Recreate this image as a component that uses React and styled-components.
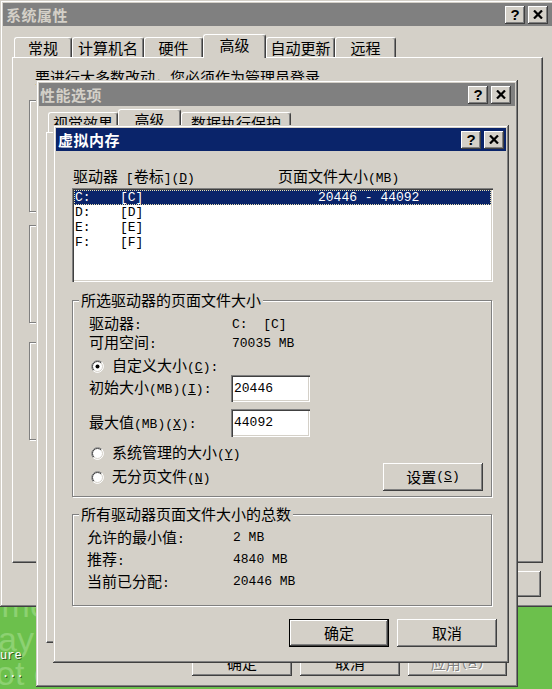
import React from "react";
import styled, { createGlobalStyle } from "styled-components";

const FACE = "#d4d0c8";
const NAVY = "#0a246a";
const CJK = `"Noto Sans CJK SC", "Noto Sans CJK JP", sans-serif`;

const Global = createGlobalStyle`
  html, body { margin: 0; padding: 0; background: #6cc04c; }
  body {
    width: 552px; height: 689px; overflow: hidden;
    font-family: ${CJK}; font-size: 15px; color: #000;
  }
`;

const Lat = styled.span`
  font-family: "Liberation Mono", monospace;
  font-size: 13px;
  white-space: pre;
`;
const Acc = styled.span`
  text-decoration: underline;
  text-underline-offset: 1px;
`;

function T({ s }) {
  const out = [];
  const re = /([\x00-\x7f]+)|([^\x00-\x7f]+)/g;
  let m;
  let k = 0;
  while ((m = re.exec(s))) {
    if (m[1]) {
      const parts = m[1].split(/&(.)/);
      out.push(
        <Lat key={k++}>
          {parts.map((p, i) => (i % 2 ? <Acc key={i}>{p}</Acc> : p))}
        </Lat>
      );
    } else {
      out.push(<React.Fragment key={k++}>{m[2]}</React.Fragment>);
    }
  }
  return <>{out}</>;
}

/* ---------- desktop ---------- */
const Desktop = styled.div`
  position: relative;
  width: 552px;
  height: 689px;
  overflow: hidden;
  background: #6cc04c;
`;
const Watermark = styled.div`
  position: absolute;
  left: ${(p) => p.$x}px;
  top: ${(p) => p.$y}px;
  font-family: "Liberation Sans", sans-serif;
  font-size: 34px;
  line-height: 34px;
  color: #8dd172;
  white-space: pre;
`;
const IconLabel = styled.div`
  position: absolute;
  left: ${(p) => p.$x}px;
  top: ${(p) => p.$y}px;
  font-family: "Liberation Mono", monospace;
  font-size: 12px;
  line-height: 12px;
  color: #fff;
  text-shadow: 1px 1px #2d5a20;
  white-space: pre;
`;

/* ---------- window chrome ---------- */
const Win = styled.div`
  position: absolute;
  z-index: ${(p) => p.$z};
  left: ${(p) => p.$x}px;
  top: ${(p) => p.$y}px;
  width: ${(p) => p.$w}px;
  height: ${(p) => p.$h}px;
  box-sizing: border-box;
  padding: 3px;
  background: ${FACE};
  box-shadow: inset -1px -1px #404040, inset 1px 1px ${FACE},
    inset -2px -2px #808080, inset 2px 2px #fff;
  display: flex;
  flex-direction: column;
  line-height: 18px;
`;
const TitleBar = styled.div`
  flex: none;
  height: 23px;
  display: flex;
  align-items: center;
  padding: 0 ${(p) => p.$pr ?? 2}px 0 ${(p) => p.$pl ?? 2}px;
  background: ${(p) => (p.$active ? NAVY : "#808080")};
  color: ${(p) => (p.$active ? "#fff" : FACE)};
`;
const TitleText = styled.div`
  flex: 1;
  font-weight: bold;
  font-size: 15px;
  line-height: 23px;
  letter-spacing: 0.5px;
`;
const CapBtn = styled.div`
  flex: none;
  width: 20px;
  height: 18px;
  margin-left: ${(p) => p.$gap || 0}px;
  box-sizing: border-box;
  background: ${FACE};
  box-shadow: inset -1px -1px #404040, inset 1px 1px #fff,
    inset -2px -2px #808080;
  display: flex;
  align-items: center;
  justify-content: center;
  color: #000;
  font-family: "Liberation Sans", sans-serif;
  font-weight: bold;
  font-size: 15px;
  line-height: 18px;
`;
const CloseGlyph = () => (
  <svg width="10" height="9" viewBox="0 0 10 9">
    <path d="M1 0.5 L9 8.5 M9 0.5 L1 8.5" stroke="#000" strokeWidth="2.2" />
  </svg>
);
const Caption = ({ title, active, pl, pr }) => (
  <TitleBar $active={active} $pl={pl} $pr={pr}>
    <TitleText>{title}</TitleText>
    <CapBtn>?</CapBtn>
    <CapBtn $gap={3}>
      <CloseGlyph />
    </CapBtn>
  </TitleBar>
);

const WinBody = styled.div`
  flex: 1;
  display: flex;
  flex-direction: column;
  padding: ${(p) => p.$pad};
`;

/* ---------- tabs ---------- */
const TabRow = styled.div`
  display: flex;
  align-items: flex-end;
  height: ${(p) => p.$h}px;
  margin-top: ${(p) => p.$mt}px;
  padding-left: 2px;
  position: relative;
  z-index: 2;
`;
const Tab = styled.div`
  flex: none;
  width: ${(p) => p.$w}px;
  height: ${(p) => (p.$sel ? 24 : 20)}px;
  margin-bottom: ${(p) => (p.$sel ? -1 : 0)}px;
  box-sizing: border-box;
  border-top: 1px solid #fff;
  border-left: 1px solid #fff;
  border-right: 1px solid #404040;
  border-radius: 3px 3px 0 0;
  box-shadow: inset -1px 0 #808080;
  background: ${FACE};
  display: flex;
  align-items: ${(p) => (p.$sel ? "flex-start" : "center")};
  justify-content: center;
  padding-top: ${(p) => (p.$sel ? 1 : 0)}px;
  white-space: nowrap;
`;
const Panel = styled.div`
  width: ${(p) => p.$w}px;
  height: ${(p) => p.$h}px;
  box-sizing: border-box;
  border-top: 1px solid #fff;
  border-left: 1px solid #fff;
  border-right: 1px solid #404040;
  border-bottom: 1px solid #404040;
  box-shadow: inset -1px -1px #808080;
  display: flex;
  flex-direction: column;
  align-items: flex-start;
  position: relative;
  z-index: 1;
`;
const Notice = styled.div`
  margin: 10px 0 0 22px;
  line-height: 18px;
`;

/* ---------- group box ---------- */
const Group = styled.div`
  position: relative;
  flex: none;
  width: ${(p) => p.$w}px;
  height: ${(p) => p.$h}px;
  margin-top: ${(p) => p.$mt}px;
  margin-left: ${(p) => p.$ml || 0}px;
  box-sizing: border-box;
  border: 1px solid #808080;
  box-shadow: inset 1px 1px #fff, 1px 1px #fff;
  padding: ${(p) => p.$pad || "0"};
  display: flex;
  flex-direction: column;
`;
const Legend = styled.div`
  position: absolute;
  left: 6px;
  top: -10px;
  padding: 0 2px;
  background: ${FACE};
  line-height: 18px;
  white-space: nowrap;
`;

/* ---------- controls ---------- */
const Btn = styled.button`
  flex: none;
  width: ${(p) => p.$w || 100}px;
  height: ${(p) => p.$h || 28}px;
  border: none;
  padding: 0;
  margin: 0;
  font: inherit;
  box-sizing: border-box;
  background: ${FACE};
  display: flex;
  align-items: center;
  justify-content: center;
  color: ${(p) => (p.$dis ? "#808080" : "#000")};
  text-shadow: ${(p) => (p.$dis ? "1px 1px #fff" : "none")};
  box-shadow: ${(p) =>
    p.$def
      ? `inset 0 0 0 1px #000, inset -2px -2px #404040, inset 2px 2px #fff, inset -3px -3px #808080`
      : `inset -1px -1px #404040, inset 1px 1px #fff, inset -2px -2px #808080`};
`;
const BtnRow = styled.div`
  display: flex;
  justify-content: flex-end;
  gap: 8px;
  margin-top: ${(p) => p.$mt}px;
  padding-right: ${(p) => p.$pr}px;
  width: ${(p) => p.$w}px;
  box-sizing: border-box;
`;

const HeaderRow = styled.div`
  display: flex;
  margin-top: 16px;
  height: 18px;
  padding-left: 1px;
`;
const HeadCell = styled.div`
  width: ${(p) => p.$w}px;
  flex: none;
  white-space: nowrap;
`;
const ListBox = styled.div`
  margin-top: 3px;
  width: 421px;
  height: 94px;
  box-sizing: border-box;
  padding: 2px;
  background: #fff;
  box-shadow: inset 1px 1px #808080, inset 2px 2px #404040,
    inset -1px -1px #fff, inset -2px -2px ${FACE};
`;
const ListRow = styled.div`
  display: flex;
  align-items: center;
  height: 15px;
  box-sizing: border-box;
  padding-left: 1px;
  background: ${(p) => (p.$sel ? NAVY : "transparent")};
  color: ${(p) => (p.$sel ? "#fff" : "#000")};
  outline: ${(p) => (p.$sel ? "1px dotted #e8e0b0" : "none")};
  outline-offset: -1px;
  font-family: "Liberation Mono", monospace;
  font-size: 13px;
  line-height: 15px;
`;
const Cell = styled.span`
  flex: none;
  width: ${(p) => p.$w}px;
  white-space: pre;
`;

const FieldRow = styled.div`
  display: grid;
  grid-template-columns: ${(p) => p.$col}px 1fr;
  align-items: center;
  height: ${(p) => p.$h}px;
  margin-top: ${(p) => p.$mt || 0}px;
  white-space: nowrap;
`;
const RadioRow = styled.div`
  display: flex;
  align-items: center;
  gap: 8px;
  height: 18px;
  margin-top: ${(p) => p.$mt || 0}px;
  padding-left: 2px;
  white-space: nowrap;
`;
const Edit = styled.div`
  width: 79px;
  height: ${(p) => p.$h}px;
  box-sizing: border-box;
  margin-left: -1px;
  padding-left: 3px;
  background: #fff;
  display: flex;
  align-items: center;
  box-shadow: inset 1px 1px #808080, inset 2px 2px #404040,
    inset -1px -1px #fff, inset -2px -2px ${FACE};
`;
const BottomArea = styled.div`
  display: flex;
  justify-content: space-between;
  align-items: flex-end;
  margin-top: 7px;
  height: 47px;
`;
const RadioCol = styled.div`
  display: flex;
  flex-direction: column;
  align-self: flex-start;
`;

const Radio = ({ on }) => (
  <svg width="13" height="13" viewBox="0 0 13 13" style={{ flex: "none" }}>
    <circle cx="6.5" cy="6.5" r="6" fill="#fff" />
    <path d="M2.26 10.74 A6 6 0 0 1 10.74 2.26" stroke="#808080" fill="none" />
    <path d="M10.74 2.26 A6 6 0 0 1 2.26 10.74" stroke="#fff" fill="none" />
    <path d="M2.96 10.04 A5 5 0 0 1 10.04 2.96" stroke="#404040" fill="none" />
    <path d="M10.04 2.96 A5 5 0 0 1 2.96 10.04" stroke={FACE} fill="none" />
    {on && <circle cx="6.5" cy="6.5" r="2" fill="#000" />}
  </svg>
);

const drives = [
  { d: "C:", l: "[C]", s: "20446 - 44092", sel: true },
  { d: "D:", l: "[D]", s: "" },
  { d: "E:", l: "[E]", s: "" },
  { d: "F:", l: "[F]", s: "" },
];

export default function App() {
  return (
    <Desktop>
      <Global />
      <Watermark $x={-6} $y={588}>ime</Watermark>
      <Watermark $x={-2} $y={622}>ay c</Watermark>
      <Watermark $x={-4} $y={656}>ot c</Watermark>
      <IconLabel $x={0} $y={650}>ure</IconLabel>
      <IconLabel $x={2} $y={668}>...</IconLabel>

      {/* 系统属性 */}
      <Win $z={1} $x={0} $y={0} $w={556} $h={607}>
        <Caption title="系统属性" pl={3} pr={5} />
        <WinBody $pad="0 0 0 9px">
          <TabRow $mt={8} $h={23}>
            <Tab $w={58}>常规</Tab>
            <Tab $w={72}>计算机名</Tab>
            <Tab $w={59}>硬件</Tab>
            <Tab $w={63} $sel>高级</Tab>
            <Tab $w={69}>自动更新</Tab>
            <Tab $w={61}>远程</Tab>
          </TabRow>
          <Panel $w={531} $h={506}>
            <Notice>要进行大多数改动，您必须作为管理员登录。</Notice>
            <Group $w={488} $h={112} $mt={14} $ml={16} />
            <Group $w={488} $h={98} $mt={13} $ml={16} />
            <Group $w={488} $h={98} $mt={19} $ml={16} />
          </Panel>
          <BtnRow $mt={8} $pr={2} $w={531}>
            <Btn $w={98} $h={26}>确定</Btn>
            <Btn $w={98} $h={26}>取消</Btn>
            <Btn $w={98} $h={26}>
              <T s="应用(&A)" />
            </Btn>
          </BtnRow>
        </WinBody>
      </Win>

      {/* 性能选项 */}
      <Win $z={2} $x={36} $y={80} $w={482} $h={607}>
        <Caption title="性能选项" pl={1} pr={4} />
        <WinBody $pad="0 0 0 7px">
          <TabRow $mt={3} $h={23}>
            <Tab $w={70}>视觉效果</Tab>
            <Tab $w={63} $sel>高级</Tab>
            <Tab $w={110}>数据执行保护</Tab>
          </TabRow>
          <Panel $w={462} $h={511} />
          <BtnRow $mt={6} $pr={1} $w={462}>
            <Btn $h={27}>确定</Btn>
            <Btn $h={27}>取消</Btn>
            <Btn $h={27} $w={99} $dis>
              <T s="应用(&A)" />
            </Btn>
          </BtnRow>
        </WinBody>
      </Win>

      {/* 虚拟内存 */}
      <Win $z={3} $x={53} $y={125} $w={456} $h={538}>
        <Caption title="虚拟内存" active pl={2} pr={2} />
        <WinBody $pad="0 0 0 16px">
          <HeaderRow>
            <HeadCell $w={205}>
              <T s="驱动器 [卷标](&D)" />
            </HeadCell>
            <HeadCell>
              <T s="页面文件大小(MB)" />
            </HeadCell>
          </HeaderRow>
          <ListBox>
            {drives.map((r) => (
              <ListRow key={r.d} $sel={r.sel}>
                <Cell $w={45}>{r.d}</Cell>
                <Cell $w={198}>{r.l}</Cell>
                <Cell>{r.s}</Cell>
              </ListRow>
            ))}
          </ListBox>

          <Group $w={420} $h={197} $mt={18} $pad="13px 8px 0 16px">
            <Legend>所选驱动器的页面文件大小</Legend>
            <FieldRow $col={143} $h={19}>
              <span>
                <T s="驱动器:" />
              </span>
              <Lat>C:  [C]</Lat>
            </FieldRow>
            <FieldRow $col={143} $h={19}>
              <span>
                <T s="可用空间:" />
              </span>
              <Lat>70035 MB</Lat>
            </FieldRow>
            <RadioRow $mt={5}>
              <Radio on />
              <span>
                <T s="自定义大小(&C):" />
              </span>
            </RadioRow>
            <FieldRow $col={143} $h={27}>
              <span>
                <T s="初始大小(MB)(&I):" />
              </span>
              <Edit $h={27}>
                <Lat>20446</Lat>
              </Edit>
            </FieldRow>
            <FieldRow $col={143} $h={28} $mt={7}>
              <span>
                <T s="最大值(MB)(&X):" />
              </span>
              <Edit $h={28}>
                <Lat>44092</Lat>
              </Edit>
            </FieldRow>
            <BottomArea>
              <RadioCol>
                <RadioRow>
                  <Radio />
                  <span>
                    <T s="系统管理的大小(&Y)" />
                  </span>
                </RadioRow>
                <RadioRow $mt={6}>
                  <Radio />
                  <span>
                    <T s="无分页文件(&N)" />
                  </span>
                </RadioRow>
              </RadioCol>
              <Btn>
                <T s="设置(&S)" />
              </Btn>
            </BottomArea>
          </Group>

          <Group $w={420} $h={92} $mt={17} $pad="12px 8px 0 14px">
            <Legend>所有驱动器页面文件大小的总数</Legend>
            <FieldRow $col={146} $h={22}>
              <span>
                <T s="允许的最小值:" />
              </span>
              <Lat>2 MB</Lat>
            </FieldRow>
            <FieldRow $col={146} $h={22}>
              <span>
                <T s="推荐:" />
              </span>
              <Lat>4840 MB</Lat>
            </FieldRow>
            <FieldRow $col={146} $h={22}>
              <span>
                <T s="当前已分配:" />
              </span>
              <Lat>20446 MB</Lat>
            </FieldRow>
          </Group>

          <BtnRow $mt={13} $pr={9} $w={434}>
            <Btn $def>确定</Btn>
            <Btn>取消</Btn>
          </BtnRow>
        </WinBody>
      </Win>
    </Desktop>
  );
}
